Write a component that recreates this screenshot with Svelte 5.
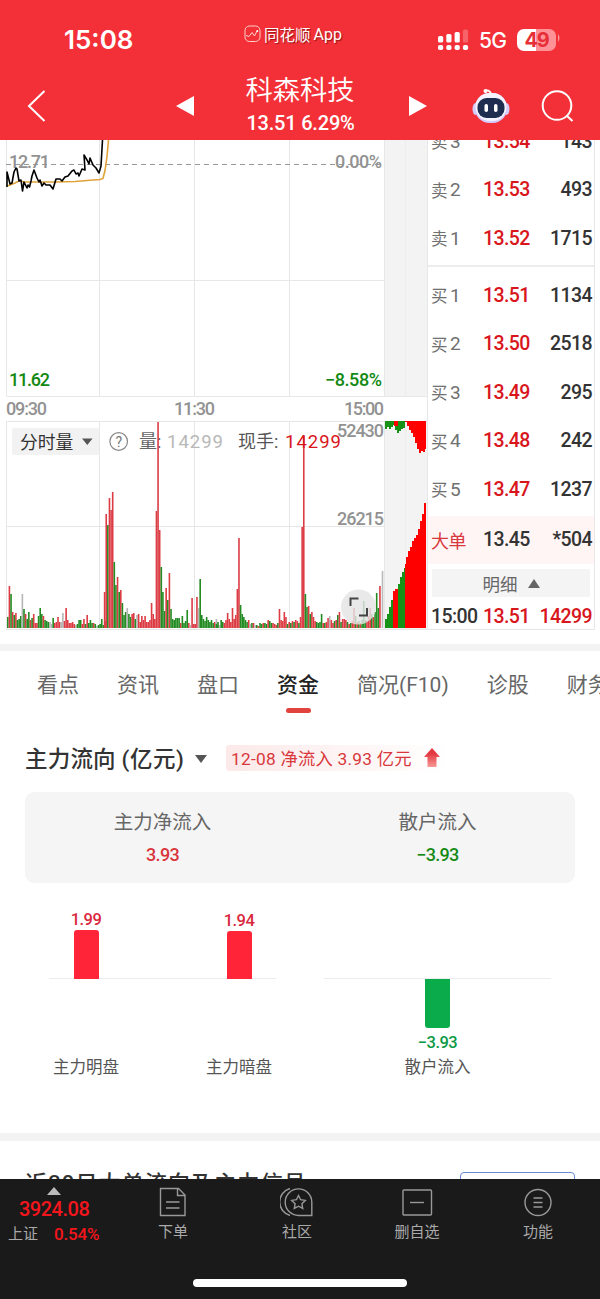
<script lang="ts">
	type Quote = { label: string; price: string; volume: string };

	const sells: Quote[] = [
		{ label: '卖3', price: '13.54', volume: '143' },
		{ label: '卖2', price: '13.53', volume: '493' },
		{ label: '卖1', price: '13.52', volume: '1715' }
	];

	const buys: Quote[] = [
		{ label: '买1', price: '13.51', volume: '1134' },
		{ label: '买2', price: '13.50', volume: '2518' },
		{ label: '买3', price: '13.49', volume: '295' },
		{ label: '买4', price: '13.48', volume: '242' },
		{ label: '买5', price: '13.47', volume: '1237' }
	];

	const tabs = ['看点', '资讯', '盘口', '资金', '简况(F10)', '诊股', '财务'];
	let activeTab = $state('资金');

	const flows = [
		{ name: '主力明盘', value: 1.99, height: 49 },
		{ name: '主力暗盘', value: 1.94, height: 48 }
	];

	// minute volume: r = up, g = down, x = flat, followed by the bar height
	const segments = [
		{
			x: 7,
			data: 'g11 r42 g34 r16 g13 r15 g8 g9 g12 x34 g19 r14 g9 g16 r8 g10 r14 r5 r5 g12 g20 g14 r12 g8 g7 g6 x6 x4 g10 r5 r6 r11 r6 x6 x15 r7 r20 r8 r5 r5 r6 r4 x3 g4 g8 g8 r4 r9 g4 r13 g5 g8 g5 r5 g4 x2 g3 g4 g9 g3 r7'
		},
		{
			x: 103.8,
			data: 'r36 r114 g103 r130 r118 r136 g66 g43 r51 g36 r38 g25 g13 g16 x20 g14 g11 r14 r15 g9 x13 r14 r6 r12 r8 r12 r6 r6 r8 r25 r14 r9 r117 r206 r98 g61 g36 g17 r40 g28 r55 g19 g9 g8 g10 g10 g10 r5 g12 g5 g7 g18 r5 x3 r30 r4 r4 r31 x20 g49 g13 g9 g7 g11 g8 g6 g8 g5 r6 x9 g6'
		},
		{
			x: 215.5,
			data: 'g4 g3 x3 g8 g6 r5 r8 r15 r9 r6 r20 r9 r13 r39 r90 g23 g14 g11 g8 g6 r8 x4 g5 r5 x3 g3 r2 g5 g4 r5 g5 g4 r8 g7 g5 r5 r4 r3 g5 r19 r8 r7 r16 r11 g4 r6 g5 r7 g6 r8 r7 g5 r11 r101 r192 g34 g21 r22 g14 r16 r11 r7 g6 g5 g6 g14 r5 g5 r6 r10 x12 r8 r5 g7 r8 g13 r16 g6 r9 r9 r8 g6 r4 g5 r7 r20 g12 r6 g7 r5 g8 g27 g8 r7 r12 r20 g14 r11 g16 g35 g20 r42'
		}
	];

	const tone: Record<string, string> = { r: '#dc3c44', g: '#228b22', x: '#b5b5b5' };
	const step = 1.62;

	const bars = segments.flatMap((s) =>
		s.data.split(' ').map((d, i) => ({
			x: s.x + i * step,
			h: Number(d.slice(1)),
			fill: tone[d[0]]
		}))
	);
</script>

{#snippet quoteRow(q: Quote)}
	<div class="quote">
		<span class="side">{q.label[0]}<i>{q.label[1]}</i></span>
		<b class="up">{q.price}</b>
		<b>{q.volume}</b>
	</div>
{/snippet}

<div class="screen">
	<header>
		<div class="status">
			<span class="time">15:08</span>
			<span class="app-name">
				<svg width="17" height="18" viewBox="0 0 17 18" fill="none" stroke="#fbd3c8">
					<rect x="1" y="1" width="15" height="15.5" rx="4.5" />
					<path d="M2 10.5l3 1 3-4 2.5 3.5L13 6" />
					<circle cx="13.3" cy="6" r="1" fill="#fff" stroke="none" />
				</svg>
				同花顺<em>App</em>
			</span>
			<svg class="signal" width="31" height="22" viewBox="0 0 31 22" fill="#fff">
				<rect x="0" y="6" width="5.2" height="6.500" rx="1.6" />
				<rect x="8.3" y="4" width="5.2" height="8.500" rx="1.6" />
				<rect x="16.6" y="2" width="5.2" height="10.500" rx="1.6" />
				<rect x="24.9" y="-0.500" width="5.2" height="13" rx="1.6" opacity="0.25" />
				<rect x="0" y="15" width="5.2" height="5" rx="1.8" />
				<rect x="8.3" y="15" width="5.2" height="5" rx="1.8" />
				<rect x="16.6" y="15" width="5.2" height="5" rx="1.8" />
				<rect x="24.9" y="15" width="5.2" height="5" rx="1.8" />
			</svg>
			<span class="network">5G</span>
			<span class="battery"><span>4</span><span>9</span></span>
			<svg width="4" height="8" viewBox="0 0 4 8"><path d="M1 0q3 4 0 8z" fill="#fff" opacity="0.5" /></svg>
		</div>

		<div class="title-bar">
			<svg class="back" width="20" height="34" viewBox="0 0 20 34" fill="none" stroke="#fff" stroke-width="2">
				<path d="M17.5 2L2 17l15.500 15" />
			</svg>
			<svg class="prev" width="18" height="20" viewBox="0 0 18 20"><path d="M0 10L18 0v20z" fill="#fff" /></svg>
			<div class="stock">
				<h1>科森科技</h1>
				<p>13.51 6.29%</p>
			</div>
			<svg class="next" width="18" height="20" viewBox="0 0 18 20"><path d="M18 10L0 0v20z" fill="#fff" /></svg>
			<svg class="robot" width="38" height="36" viewBox="0 0 38 36">
				<path d="M13 3c2-1 5-1 6 3" fill="none" stroke="#fff" stroke-width="2" />
				<circle cx="13.500" cy="3" r="2" fill="#fff" />
				<ellipse cx="3.500" cy="21" rx="3" ry="6" fill="#d3cbf8" />
				<ellipse cx="34.500" cy="21" rx="3" ry="6" fill="#d3cbf8" />
				<rect x="3" y="5" width="32" height="30" rx="14.500" fill="#d4caff" />
				<rect x="3.500" y="5" width="31" height="28" rx="14" fill="#f5f2ff" />
				<rect x="5.500" y="10" width="27" height="20" rx="9" fill="#1e2c50" />
				<rect x="12.500" y="16" width="3.500" height="8" rx="1.700" fill="#fff" />
				<rect x="22" y="16" width="3.500" height="8" rx="1.700" fill="#fff" />
			</svg>
			<svg class="search" width="33" height="33" viewBox="0 0 33 33" fill="none" stroke="#fff" stroke-width="2">
				<circle cx="16" cy="15.500" r="14.300" />
				<path d="M25.500 25.500l6 5.500" />
			</svg>
		</div>
	</header>

	<main>
		<section class="market">
			<svg class="chart" width="428" height="504" viewBox="0 140 428 504">
				<path d="M384.500 140h43v256h-43zM384.500 421h43v208h-43z" fill="#f3f3f3" />
				<g class="grid">
					<path d="M6.500 140V396.500H427M6.500 280.500H384M99.500 140V396M194.500 140V396M289.500 140V396M384.500 140V396" />
					<path d="M6.500 629.500V421.500H427M6.500 526.500H384M99.500 421V629M194.500 421V629M289.500 421V629M384.500 421V629M6 629.500H427.500V140" />
					<path d="M405.500 140V396M405.500 421V629" stroke="#ededed" />
				</g>
				<path d="M6 164.500H384" stroke="#999" stroke-dasharray="5 4" />
				<g class="axis">
					<text x="9" y="168" textLength="41">12.71</text>
					<text x="382" y="168" textLength="47" text-anchor="end">0.00%</text>
					<text x="6" y="415" textLength="41">09:30</text>
					<text x="174" y="415" textLength="41">11:30</text>
					<text x="384" y="415" textLength="40" text-anchor="end">15:00</text>
					<text x="9" y="385.500" class="low" textLength="41">11.62</text>
					<text x="382" y="385.500" class="low" textLength="57" text-anchor="end">−8.58%</text>
				</g>
				<path
					d="M7 186l3-1 5-2 4-2 6 1h30l20-.5 18-1.500 7-.5 3-1 2-8 2-14 1.500-16.500"
					fill="none"
					stroke="#e0a23a"
					stroke-width="1.600"
				/>
				<path
					d="M7 187V172l3 12 2-1 2-11 2-4 1 1 2 12 2-1 1.500 11 1.500-9 3 6 1-3 1.500 2L31 181l1-5 2-6 3 8 2 4 1-2 2 6 2-3 2 2h4l3 4 3-10h4l2 2 3-4 3-1 4-5 2-1 2 4 2-1 1 3 3-7 3 1L84 155l3 5 2 4 1-6 3 7 3 3 3 5 2-7 1.500-26"
					fill="none"
					stroke="#000"
					stroke-width="1.600"
					stroke-linejoin="round"
				/>

				<rect x="12" y="428" width="87" height="27" rx="2" fill="#f2f2f2" />
				<text x="20" y="448.500" font-size="17.800" fill="#333">分时量</text>
				<path d="M82 438.500h10.500l-5.200 6.500z" fill="#555" />
				<circle cx="118.700" cy="441.500" r="8.800" fill="none" stroke="#888" stroke-width="1.200" />
				<text x="118.700" y="446.500" font-size="14" fill="#777" text-anchor="middle">?</text>
				<text x="139" y="448" font-size="18" fill="#666">量:</text>
				<text x="167" y="448" font-size="18.500" textLength="56" fill="#b8b8b8">14299</text>
				<text x="238" y="448" font-size="18" fill="#555">现手:</text>

				{#each bars as bar}
					<rect x={bar.x} y={628 - bar.h} width="1.600" height={bar.h} fill={bar.fill} />
				{/each}
				<path d="M382.500 571V628" stroke="#bbb" stroke-width="1.700" />
				<text x="285" y="448" font-size="18.500" textLength="56" fill="#d9161c">14299</text>
				<g class="axis">
					<text x="384" y="437" textLength="47" text-anchor="end">52430</text>
					<text x="384" y="525" textLength="47" text-anchor="end">26215</text>
				</g>

				<path d="M385 421h20v7h-2v1h-2v2h-2v2h-2v-3h-2v-5h-2v2h-2v2h-2v-2h-2v2h-2z" fill="#169216" />
				<path d="M394 421h4v5h-4z" fill="#f00" />
				<path d="M405 421h21v28h-1v3h-2v-1h-2v2h-2v-4h-2v-6h-2v-6h-2v-4h-2v-3h-2v-4h-2v-4h-2z" fill="#f00" />
				<path d="M385 628v-9h2v-5h2v-7h2v-7h2v28z" fill="#169216" />
				<path d="M393 628v-37h2v-2h3v39z" fill="#f00" />
				<path d="M398 628v-44h2v-7h2v-5h2v-4h1.500v60z" fill="#169216" />
				<path d="M405 628v-64h1v-7h2v-6h2v-4h2v-6h2v-3h2v-3h2v-6h2v-8h2v-7h2v-11h2v125z" fill="#f00" />

				<circle cx="358.500" cy="607" r="17.500" fill="#e4e4e4" opacity="0.82" />
				<path d="M350.500 606v-7.500h8M367 608v7.500h-8" fill="none" stroke="#444" stroke-width="2" />
			</svg>

			<aside>
				<div class="sells">
					{#each sells as q}
						{@render quoteRow(q)}
					{/each}
				</div>
				<div class="buys">
					{#each buys as q}
						{@render quoteRow(q)}
					{/each}
				</div>
				<div class="quote big">
					<span class="side">大单</span>
					<b>13.45</b>
					<b>*504</b>
				</div>
				<button class="detail">
					明细
					<svg width="12" height="9" viewBox="0 0 12 9"><path d="M0 9L6 0l6 9z" fill="#666" /></svg>
				</button>
				<div class="quote last">
					<b>15:00</b>
					<b class="up">13.51</b>
					<b class="up">14299</b>
				</div>
			</aside>
		</section>

		<nav class="tabs">
			{#each tabs as tab}
				<button class:active={tab === activeTab} onclick={() => (activeTab = tab)}>{tab}</button>
			{/each}
		</nav>

		<section class="flow">
			<div class="flow-head">
				<h2>主力流向 <span>(亿元)</span></h2>
				<svg width="12" height="8" viewBox="0 0 12 8"><path d="M0 0h12L6 8z" fill="#555" /></svg>
				<p class="tag">
					12-08 净流入 3.93 亿元
					<svg width="16" height="19" viewBox="0 0 16 19">
						<defs>
							<linearGradient id="rise" x2="0" y2="1">
								<stop offset="0.3" stop-color="#e4393f" />
								<stop offset="1" stop-color="#f79a97" />
							</linearGradient>
						</defs>
						<path d="M8 0l8 9h-3.500v10h-9V9H0z" fill="url(#rise)" />
					</svg>
				</p>
			</div>

			<div class="summary">
				<div>
					<span>主力净流入</span>
					<b class="in">3.93</b>
				</div>
				<div>
					<span>散户流入</span>
					<b class="out">−3.93</b>
				</div>
			</div>

			<div class="flow-charts">
				<div class="plot">
					{#each flows as f}
						<div class="col">
							<div class="positive">
								<b>{f.value}</b>
								<div class="bar" style:height="{f.height}px"></div>
							</div>
							<div class="negative"></div>
							<span>{f.name}</span>
						</div>
					{/each}
				</div>
				<div class="plot">
					<div class="col">
						<div class="positive"></div>
						<div class="negative">
							<div class="bar"></div>
							<b>−3.93</b>
						</div>
						<span>散户流入</span>
					</div>
				</div>
			</div>
		</section>

		<section class="signals">
			<h2>近30日大单流向及主力信号</h2>
			<div class="more"></div>
		</section>
	</main>

	<footer>
		<div class="toolbar">
			<div class="index">
				<svg width="14" height="8" viewBox="0 0 14 8"><path d="M0 8l7-8 7 8z" fill="#bbb" /></svg>
				<b>3924.08</b>
				<p>上证 <em>0.54%</em></p>
			</div>
			<div class="tool">
				<svg width="32" height="30" viewBox="0 0 32 30">
					<path d="M3.500 1.500h18L28 8v20.500H3.500zM20.500 1.500v7H28M9 15h13.500M9 21h13.500" />
				</svg>
				下单
			</div>
			<div class="tool">
				<svg width="34" height="30" viewBox="0 0 34 30">
					<path d="M10 1.500a14 14 0 0 0 0 27M18.500 28.500a13.300 13.300 0 1 1 13.300-13.300v13.300z" />
					<path d="M18.500 8.500l2.100 4.200 4.700.7-3.400 3.300.8 4.700-4.200-2.200-4.200 2.200.8-4.700-3.400-3.300 4.700-.7z" />
				</svg>
				社区
			</div>
			<div class="tool">
				<svg width="32" height="30" viewBox="0 0 32 30"><rect x="2" y="3" width="28.500" height="25" rx="1" /><path d="M9 15.500h14" /></svg>
				删自选
			</div>
			<div class="tool">
				<svg width="32" height="30" viewBox="0 0 32 30"><circle cx="16" cy="15.500" r="13" /><path d="M11.500 11h9M11.500 15.500h9M11.500 20h9" /></svg>
				功能
			</div>
		</div>
		<div class="home-bar"></div>
	</footer>
</div>

<style>
	.screen {
		width: 600px;
		height: 1299px;
		display: flex;
		flex-direction: column;
		overflow: hidden;
		background: #fff;
		color: #333;
		font-family: Roboto, 'Noto Sans CJK SC', sans-serif;
	}

	h1, h2, p {
		margin: 0;
		font-weight: 400;
	}

	button {
		padding: 0;
		border: none;
		background: none;
		font-family: inherit;
		cursor: pointer;
	}

	b {
		font-weight: 500;
	}

	em, i {
		font-style: normal;
	}

	header {
		height: 140px;
		flex-shrink: 0;
		background: #f33038;
		color: #fff;
	}

	.status {
		height: 72px;
		display: flex;
		align-items: center;
		padding-top: 4px;
		box-sizing: border-box;
	}

	.time {
		width: 180px;
		padding-left: 64px;
		font-family: Inter, sans-serif;
		font-size: 26px;
		font-weight: 600;
		line-height: 76px;
		padding-top: 4px;
	}

	.app-name {
		display: flex;
		align-items: center;
		width: 194px;
		font-size: 15.500px;
		text-shadow: 1px 1px 1px rgba(80, 0, 0, 0.6);
		margin-top: -8px;
	}

	.app-name svg {
		margin-right: 3px;
	}

	.app-name em {
		margin-left: 3px;
		font-size: 16px;
	}

	.signal {
		margin-top: 5px;
		overflow: visible;
	}

	.network {
		width: 38px;
		margin: 5px 0 0 10px;
		font-family: Inter, sans-serif;
		font-size: 21px;
		font-weight: 500;
		letter-spacing: -0.8px;
	}

	.battery {
		display: flex;
		width: 39px;
		height: 22px;
		margin: 4px 1px 0 0;
		border-radius: 7px;
		background: linear-gradient(90deg, #fff 50%, #ff9297 50%);
		color: #e72f38;
		font-family: Inter, sans-serif;
		font-size: 20px;
		font-weight: 700;
		line-height: 22px;
		justify-content: center;
		letter-spacing: -1.2px;
	}

	.title-bar {
		display: flex;
		align-items: center;
		height: 68px;
	}

	.back {
		margin: 0 129px 0 27px;
	}

	.stock {
		width: 215px;
		text-align: center;
	}

	.stock h1 {
		margin-left: -3px;
		font-size: 27.300px;
		line-height: 35px;
		font-weight: 350;
	}

	.stock p {
		margin-left: -2px;
		font-size: 20px;
		line-height: 29px;
		font-weight: 500;
		letter-spacing: -0.2px;
	}

	.robot {
		margin: 0 31px 0 45px;
	}

	main {
		flex: 1;
		min-height: 0;
		overflow: hidden;
	}

	.market {
		display: flex;
		height: 504px;
		border-bottom: 7px solid #f3f3f3;
	}

	.chart {
		display: block;
		flex-shrink: 0;
	}

	.grid {
		fill: none;
		stroke: #e7e7e7;
	}

	.axis {
		fill: #929292;
		font-size: 18px;
		font-weight: 500;
	}

	.axis .low {
		fill: #128912;
	}

	aside {
		width: 166px;
		height: 489px;
		border-right: 1px solid #e7e7e7;
		border-bottom: 1px solid #e7e7e7;
	}

	.sells {
		display: flow-root;
		height: 125px;
		border-bottom: 2px solid #ececec;
	}

	.sells .quote:first-child {
		margin-top: -23px;
	}

	.buys {
		padding-top: 4px;
	}

	.quote {
		display: grid;
		grid-template-columns: 52px 50px 1fr;
		align-items: center;
		height: 48.500px;
		padding: 0 2px 0 3px;
		font-size: 19.500px;
		letter-spacing: -0.6px;
		white-space: nowrap;
	}

	.quote b:last-child {
		text-align: right;
	}

	.side {
		display: flex;
		align-items: center;
		color: #707070;
		font-size: 16.500px;
	}

	.side i {
		margin-left: 3px;
		font-size: 19px;
	}

	.quote b.up {
		color: #d8161c;
	}

	.big {
		background: #fff5f5;
		margin-top: 2px;
	}

	.big .side {
		color: #d9383c;
		font-size: 18px;
	}

	.detail {
		display: flex;
		align-items: center;
		justify-content: center;
		gap: 10px;
		width: 158px;
		height: 28px;
		margin: 5px 4px 0;
		background: #f4f4f4;
		color: #666;
		font-size: 17.500px;
	}

	.last {
		height: 38px;
	}

	.tabs {
		display: flex;
		gap: 38px;
		height: 69px;
		padding-left: 37px;
		overflow: hidden;
	}

	.tabs button {
		position: relative;
		flex-shrink: 0;
		padding-bottom: 5px;
		color: #666;
		font-size: 21px;
	}

	.tabs .active {
		color: #222;
		font-weight: 500;
	}

	.tabs .active::after {
		content: '';
		position: absolute;
		left: 9px;
		bottom: 7px;
		width: 25px;
		height: 5px;
		border-radius: 3px;
		background: #e3433f;
	}

	.flow {
		height: 421px;
		padding: 25px 25px 0;
		box-sizing: border-box;
		border-bottom: 8px solid #f3f3f3;
	}

	.flow-head {
		display: flex;
		align-items: center;
		height: 27px;
	}

	.flow h2 {
		width: 170px;
		margin-top: -3px;
		font-size: 22.500px;
		font-weight: 500;
		letter-spacing: 0.2px;
		white-space: nowrap;
	}

	.flow h2 span {
		letter-spacing: 0.5px;
	}

	.tag {
		display: flex;
		align-items: center;
		gap: 12px;
		width: 219px;
		height: 26px;
		margin: -2px 0 0 19px;
		padding-left: 5px;
		border-radius: 3px;
		background: linear-gradient(90deg, #fce9e9, #fff);
		color: #d9383c;
		font-size: 17.300px;
		letter-spacing: 0.25px;
		white-space: nowrap;
	}

	.summary {
		display: grid;
		grid-template-columns: 1fr 1fr;
		height: 91px;
		margin-top: 20px;
		border-radius: 9px;
		background: #f5f5f5;
	}

	.summary div {
		display: flex;
		flex-direction: column;
		align-items: center;
		padding-top: 17px;
	}

	.summary span {
		color: #666;
		font-size: 19.500px;
		line-height: 28px;
	}

	.summary b {
		margin-top: 5px;
		font-size: 18px;
		line-height: 26px;
		letter-spacing: -0.7px;
	}

	.in {
		color: #d9353c;
	}

	.out {
		color: #168a16;
	}

	.flow-charts {
		display: flex;
		gap: 48px;
		padding: 0 24px;
	}

	.plot {
		display: flex;
		justify-content: space-between;
		width: 227px;
		height: 210px;
		background: linear-gradient(#ececec, #ececec) 0 95px / 100% 1px no-repeat;
	}

	.plot:last-child {
		justify-content: center;
	}

	.col {
		display: flex;
		flex-direction: column;
		align-items: center;
		width: 74px;
		text-align: center;
	}

	.positive {
		display: flex;
		flex-direction: column;
		justify-content: flex-end;
		align-items: center;
		height: 96px;
		color: #d9283c;
	}

	.negative {
		display: flex;
		flex-direction: column;
		align-items: center;
		height: 72px;
		color: #0d9a45;
	}

	.positive b, .negative b {
		font-size: 16.500px;
		line-height: 21px;
		letter-spacing: -0.5px;
	}

	.negative b {
		margin-top: 4px;
	}

	.bar {
		width: 25px;
		border-radius: 3px 3px 0 0;
		background: #ff2438;
	}

	.negative .bar {
		height: 49px;
		flex-shrink: 0;
		border-radius: 0 0 3px 3px;
		background: #09ab4b;
	}

	.col span {
		color: #555;
		font-size: 16.500px;
		line-height: 34px;
		white-space: nowrap;
	}

	.signals {
		display: flex;
		justify-content: space-between;
		padding: 24px 25px 0;
	}

	.signals h2 {
		font-size: 22px;
		font-weight: 500;
		letter-spacing: 1.150px;
		white-space: nowrap;
	}

	.more {
		width: 113px;
		height: 30px;
		margin-top: 7px;
		border: 1px solid #668bd0;
		border-radius: 4px;
	}

	footer {
		height: 120px;
		flex-shrink: 0;
		background: #1a1a1a;
		color: #aaa;
	}

	.toolbar {
		display: grid;
		grid-template-columns: 112px 122px 126px 114px 128px;
		height: 100px;
	}

	.index {
		padding-top: 8px;
	}

	.index svg {
		display: block;
		margin-left: 47px;
	}

	.index b {
		display: block;
		padding-left: 19px;
		color: #f5151c;
		font-size: 20px;
		line-height: 29px;
		letter-spacing: -0.5px;
	}

	.index p {
		display: flex;
		align-items: center;
		gap: 16px;
		padding-left: 8px;
		font-size: 15px;
		line-height: 20px;
	}

	.index em {
		color: #f5151c;
		font-size: 17px;
		font-weight: 500;
		letter-spacing: -0.2px;
	}

	.tool {
		display: flex;
		flex-direction: column;
		align-items: center;
		padding-top: 8px;
		font-size: 15px;
		line-height: 31px;
	}

	.tool svg {
		fill: none;
		stroke: #999;
		stroke-width: 1.400;
	}

	.home-bar {
		width: 214px;
		height: 8px;
		margin: 0 auto;
		border-radius: 4px;
		background: #fff;
	}
</style>
